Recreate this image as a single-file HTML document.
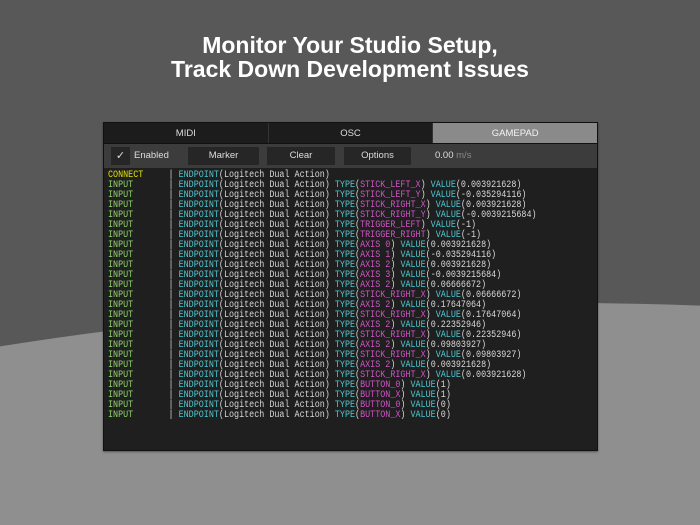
<!DOCTYPE html>
<html style="overflow:hidden;width:700px;height:525px"><head><meta charset="utf-8"><style>
*{margin:0;padding:0;box-sizing:border-box}
html,body{overflow:hidden}
body{width:700px;height:525px;background:#585858;position:relative;font-family:"Liberation Sans",sans-serif}
.bgw{position:absolute;left:0;top:0;width:700px;height:525px;overflow:hidden}
.bg{position:absolute;left:-940px;top:303px;width:3000px;height:1200px;border-radius:50%;background:#8f8f8f}
h1{position:absolute;top:33px;left:0;width:700px;text-align:center;color:#fff;font-size:23px;line-height:24px;font-weight:bold}
.panel{position:absolute;left:103px;top:122px;width:495px;height:329px;background:#1f1f1f;border:1px solid #111;box-shadow:0 1px 2px rgba(0,0,0,.4);overflow:hidden}
.tabs{display:flex;height:21px;background:#1c1c1c;border-bottom:1px solid #111}
.tabs div{flex:1;text-align:center;color:#ddd;font-size:9.5px;line-height:21px;border-right:1px solid #333}
.tabs div.on{background:#8a8a8a;color:#f4f4f4;border-right:none}
.tb{position:relative;height:24px;background:#3c3c3c}
.tb .b{position:absolute;top:3px;height:18px;background:#262626;color:#ddd;font-size:9.5px;line-height:18px;text-align:center}
.tb .t{position:absolute;top:3px;line-height:18px;font-size:9.5px;color:#ddd}
.log{margin:3px 0 0 4px;font-family:"Liberation Mono",monospace;font-size:10px;line-height:10px;white-space:pre;color:#d8d8d8;transform:scaleX(0.84);transform-origin:0 0;width:580px}
.y{color:#e3e300}.g{color:#8fd36a}.c{color:#4ec8d2}.m{color:#d452c8}
</style></head><body>
<div class="bgw"><div class="bg"></div></div>
<h1>Monitor Your Studio Setup,<br>Track Down Development Issues</h1>
<div class="panel">
<div class="tabs"><div>MIDI</div><div>OSC</div><div class="on">GAMEPAD</div></div>
<div class="tb">
<div class="b" style="left:7px;width:19px;font-size:11px">✓</div>
<div class="t" style="left:30px">Enabled</div>
<div class="b" style="left:84px;width:71px">Marker</div>
<div class="b" style="left:163px;width:68px">Clear</div>
<div class="b" style="left:240px;width:67px">Options</div>
<div class="t" style="left:331px">0.00 <span style="color:#888">m/s</span></div>
</div>
<div class="log"><span class="y">CONNECT</span>     | <span class="c">ENDPOINT</span>(Logitech Dual Action)
<span class="g">INPUT</span>       | <span class="c">ENDPOINT</span>(Logitech Dual Action) <span class="c">TYPE</span>(<span class="m">STICK_LEFT_X</span>) <span class="c">VALUE</span>(0.003921628)
<span class="g">INPUT</span>       | <span class="c">ENDPOINT</span>(Logitech Dual Action) <span class="c">TYPE</span>(<span class="m">STICK_LEFT_Y</span>) <span class="c">VALUE</span>(-0.035294116)
<span class="g">INPUT</span>       | <span class="c">ENDPOINT</span>(Logitech Dual Action) <span class="c">TYPE</span>(<span class="m">STICK_RIGHT_X</span>) <span class="c">VALUE</span>(0.003921628)
<span class="g">INPUT</span>       | <span class="c">ENDPOINT</span>(Logitech Dual Action) <span class="c">TYPE</span>(<span class="m">STICK_RIGHT_Y</span>) <span class="c">VALUE</span>(-0.0039215684)
<span class="g">INPUT</span>       | <span class="c">ENDPOINT</span>(Logitech Dual Action) <span class="c">TYPE</span>(<span class="m">TRIGGER_LEFT</span>) <span class="c">VALUE</span>(-1)
<span class="g">INPUT</span>       | <span class="c">ENDPOINT</span>(Logitech Dual Action) <span class="c">TYPE</span>(<span class="m">TRIGGER_RIGHT</span>) <span class="c">VALUE</span>(-1)
<span class="g">INPUT</span>       | <span class="c">ENDPOINT</span>(Logitech Dual Action) <span class="c">TYPE</span>(<span class="m">AXIS 0</span>) <span class="c">VALUE</span>(0.003921628)
<span class="g">INPUT</span>       | <span class="c">ENDPOINT</span>(Logitech Dual Action) <span class="c">TYPE</span>(<span class="m">AXIS 1</span>) <span class="c">VALUE</span>(-0.035294116)
<span class="g">INPUT</span>       | <span class="c">ENDPOINT</span>(Logitech Dual Action) <span class="c">TYPE</span>(<span class="m">AXIS 2</span>) <span class="c">VALUE</span>(0.003921628)
<span class="g">INPUT</span>       | <span class="c">ENDPOINT</span>(Logitech Dual Action) <span class="c">TYPE</span>(<span class="m">AXIS 3</span>) <span class="c">VALUE</span>(-0.0039215684)
<span class="g">INPUT</span>       | <span class="c">ENDPOINT</span>(Logitech Dual Action) <span class="c">TYPE</span>(<span class="m">AXIS 2</span>) <span class="c">VALUE</span>(0.06666672)
<span class="g">INPUT</span>       | <span class="c">ENDPOINT</span>(Logitech Dual Action) <span class="c">TYPE</span>(<span class="m">STICK_RIGHT_X</span>) <span class="c">VALUE</span>(0.06666672)
<span class="g">INPUT</span>       | <span class="c">ENDPOINT</span>(Logitech Dual Action) <span class="c">TYPE</span>(<span class="m">AXIS 2</span>) <span class="c">VALUE</span>(0.17647064)
<span class="g">INPUT</span>       | <span class="c">ENDPOINT</span>(Logitech Dual Action) <span class="c">TYPE</span>(<span class="m">STICK_RIGHT_X</span>) <span class="c">VALUE</span>(0.17647064)
<span class="g">INPUT</span>       | <span class="c">ENDPOINT</span>(Logitech Dual Action) <span class="c">TYPE</span>(<span class="m">AXIS 2</span>) <span class="c">VALUE</span>(0.22352946)
<span class="g">INPUT</span>       | <span class="c">ENDPOINT</span>(Logitech Dual Action) <span class="c">TYPE</span>(<span class="m">STICK_RIGHT_X</span>) <span class="c">VALUE</span>(0.22352946)
<span class="g">INPUT</span>       | <span class="c">ENDPOINT</span>(Logitech Dual Action) <span class="c">TYPE</span>(<span class="m">AXIS 2</span>) <span class="c">VALUE</span>(0.09803927)
<span class="g">INPUT</span>       | <span class="c">ENDPOINT</span>(Logitech Dual Action) <span class="c">TYPE</span>(<span class="m">STICK_RIGHT_X</span>) <span class="c">VALUE</span>(0.09803927)
<span class="g">INPUT</span>       | <span class="c">ENDPOINT</span>(Logitech Dual Action) <span class="c">TYPE</span>(<span class="m">AXIS 2</span>) <span class="c">VALUE</span>(0.003921628)
<span class="g">INPUT</span>       | <span class="c">ENDPOINT</span>(Logitech Dual Action) <span class="c">TYPE</span>(<span class="m">STICK_RIGHT_X</span>) <span class="c">VALUE</span>(0.003921628)
<span class="g">INPUT</span>       | <span class="c">ENDPOINT</span>(Logitech Dual Action) <span class="c">TYPE</span>(<span class="m">BUTTON_0</span>) <span class="c">VALUE</span>(1)
<span class="g">INPUT</span>       | <span class="c">ENDPOINT</span>(Logitech Dual Action) <span class="c">TYPE</span>(<span class="m">BUTTON_X</span>) <span class="c">VALUE</span>(1)
<span class="g">INPUT</span>       | <span class="c">ENDPOINT</span>(Logitech Dual Action) <span class="c">TYPE</span>(<span class="m">BUTTON_0</span>) <span class="c">VALUE</span>(0)
<span class="g">INPUT</span>       | <span class="c">ENDPOINT</span>(Logitech Dual Action) <span class="c">TYPE</span>(<span class="m">BUTTON_X</span>) <span class="c">VALUE</span>(0)</div>
</div>
</body></html>
